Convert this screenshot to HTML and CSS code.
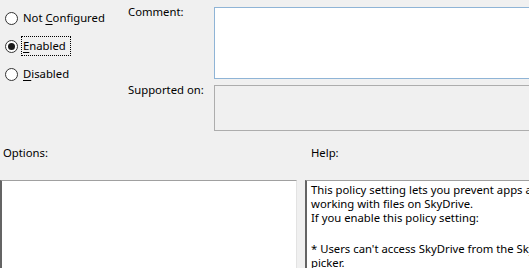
FILE: index.html
```html
<!DOCTYPE html>
<html>
<head>
<meta charset="utf-8">
<link rel="stylesheet" href="styles.css">
</head>
<body>
<div class="page">
  <div class="top">
    <div class="radios">
      <div class="radio"><span class="dot"></span><span class="lbl">Not <u>C</u>onfigured</span></div>
      <div class="radio"><span class="dot checked"></span><span class="lbl focus"><u>E</u>nabled</span></div>
      <div class="radio"><span class="dot"></span><span class="lbl"><u>D</u>isabled</span></div>
    </div>
    <div class="fields">
      <div class="field">
        <div class="flabel">Comment:</div>
        <div class="box comment"></div>
      </div>
      <div class="field">
        <div class="flabel">Supported on:</div>
        <div class="box supported"></div>
      </div>
    </div>
  </div>
  <div class="labels">
    <div class="opt-label">Options:</div>
    <div class="help-label">Help:</div>
  </div>
  <div class="bottom">
    <div class="panel options"></div>
    <div class="panel help">
      <div class="line">This policy setting lets you prevent apps and features from</div>
      <div class="line">working with files on SkyDrive.</div>
      <div class="line">If you enable this policy setting:</div>
      <div class="line blank"></div>
      <div class="line">* Users can't access SkyDrive from the SkyDrive app and file</div>
      <div class="line">picker.</div>
    </div>
  </div>
</div>
</body>
</html>
```

FILE: styles.css
```css
html, body {
  margin: 0;
  padding: 0;
  background: #f0f0f0;
  overflow: hidden;
}
body {
  font-family: "Noto Sans", "Open Sans", sans-serif;
  font-size: 11.3px;
  color: #000;
  width: 529px;
  height: 268px;
}
.page {
  width: 529px;
  height: 268px;
  overflow: hidden;
}
.top {
  display: flex;
  height: 137px;
}
.radios {
  width: 128px;
  flex: none;
  padding-top: 4px;
  display: flex;
  flex-direction: column;
}
.radio {
  display: flex;
  align-items: center;
  height: 28px;
  padding-left: 5px;
}
.dot {
  width: 11px;
  height: 11px;
  border: 1px solid #333;
  border-radius: 50%;
  background: #fff;
  position: relative;
  flex: none;
}
.dot.checked::after {
  content: "";
  position: absolute;
  left: 2px;
  top: 2px;
  width: 7px;
  height: 7px;
  border-radius: 50%;
  background: #1a1a1a;
}
.lbl {
  margin-left: 3px;
  padding: 1px 1px;
  border: 1px dotted transparent;
  line-height: 16px;
  white-space: nowrap;
}
.lbl.focus {
  border-color: #000;
  padding-right: 4px;
}
u {
  text-decoration-thickness: 1px;
  text-underline-offset: 2px;
}
.fields {
  flex: 1;
  display: flex;
  flex-direction: column;
  padding-top: 7px;
  gap: 6px;
}
.field {
  display: flex;
}
.flabel {
  width: 86px;
  flex: none;
  white-space: nowrap;
  line-height: 16px;
  margin-top: -3px;
}
.box {
  flex: 1;
  margin-right: -20px;
}
.comment {
  height: 70px;
  background: #fff;
  border: 1px solid #8fb4d6;
  border-right: none;
}
.supported {
  height: 44px;
  background: #f0f0f0;
  border: 1px solid #adadad;
  border-right: none;
}
.labels {
  display: flex;
  height: 43px;
}
.opt-label {
  width: 311px;
  flex: none;
  padding-left: 3px;
  padding-top: 8px;
  line-height: 16px;
  box-sizing: border-box;
}
.help-label {
  padding-top: 8px;
  line-height: 16px;
}
.bottom {
  display: flex;
  gap: 8px;
  height: 120px;
}
.panel {
  background: #fff;
  box-sizing: border-box;
  border-top: 1px solid #a0a0a0;
  border-left: 2px solid #646464;
  border-right: 1px solid #e3e3e3;
}
.options {
  width: 297px;
  flex: none;
}
.help {
  flex: 1;
  margin-right: -200px;
  padding: 2px 4px;
  line-height: 14px;
}
.line {
  white-space: nowrap;
  height: 14px;
}
.line.blank {
  height: 17px;
}
```
